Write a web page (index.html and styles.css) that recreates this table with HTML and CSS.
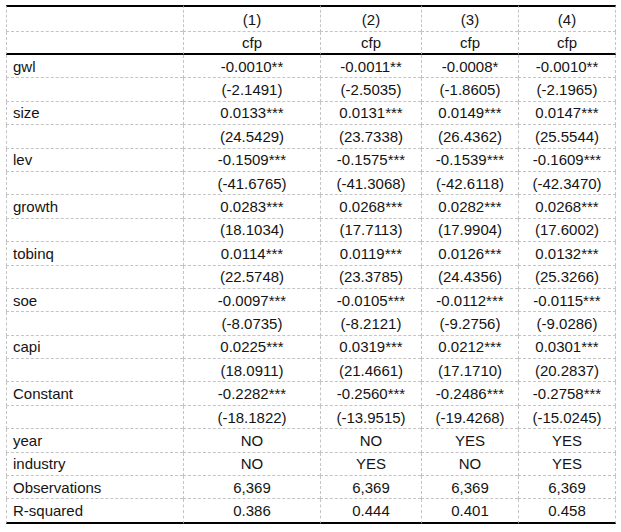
FILE: index.html
```html
<!DOCTYPE html>
<html>
<head>
<meta charset="utf-8">
<link rel="stylesheet" href="styles.css">
</head>
<body>
<table class="reg">
  <colgroup>
    <col class="c0"><col class="c1"><col class="c2"><col class="c3"><col class="c4">
  </colgroup>
  <thead>
    <tr class="h1"><td></td><td>(1)</td><td>(2)</td><td>(3)</td><td>(4)</td></tr>
    <tr class="h2"><td></td><td>cfp</td><td>cfp</td><td>cfp</td><td>cfp</td></tr>
  </thead>
  <tbody>
    <tr><td>gwl</td><td>-0.0010**</td><td>-0.0011**</td><td>-0.0008*</td><td>-0.0010**</td></tr>
    <tr><td></td><td>(-2.1491)</td><td>(-2.5035)</td><td>(-1.8605)</td><td>(-2.1965)</td></tr>
    <tr><td>size</td><td>0.0133***</td><td>0.0131***</td><td>0.0149***</td><td>0.0147***</td></tr>
    <tr><td></td><td>(24.5429)</td><td>(23.7338)</td><td>(26.4362)</td><td>(25.5544)</td></tr>
    <tr><td>lev</td><td>-0.1509***</td><td>-0.1575***</td><td>-0.1539***</td><td>-0.1609***</td></tr>
    <tr><td></td><td>(-41.6765)</td><td>(-41.3068)</td><td>(-42.6118)</td><td>(-42.3470)</td></tr>
    <tr><td>growth</td><td>0.0283***</td><td>0.0268***</td><td>0.0282***</td><td>0.0268***</td></tr>
    <tr><td></td><td>(18.1034)</td><td>(17.7113)</td><td>(17.9904)</td><td>(17.6002)</td></tr>
    <tr><td>tobinq</td><td>0.0114***</td><td>0.0119***</td><td>0.0126***</td><td>0.0132***</td></tr>
    <tr><td></td><td>(22.5748)</td><td>(23.3785)</td><td>(24.4356)</td><td>(25.3266)</td></tr>
    <tr><td>soe</td><td>-0.0097***</td><td>-0.0105***</td><td>-0.0112***</td><td>-0.0115***</td></tr>
    <tr><td></td><td>(-8.0735)</td><td>(-8.2121)</td><td>(-9.2756)</td><td>(-9.0286)</td></tr>
    <tr><td>capi</td><td>0.0225***</td><td>0.0319***</td><td>0.0212***</td><td>0.0301***</td></tr>
    <tr><td></td><td>(18.0911)</td><td>(21.4661)</td><td>(17.1710)</td><td>(20.2837)</td></tr>
    <tr><td>Constant</td><td>-0.2282***</td><td>-0.2560***</td><td>-0.2486***</td><td>-0.2758***</td></tr>
    <tr><td></td><td>(-18.1822)</td><td>(-13.9515)</td><td>(-19.4268)</td><td>(-15.0245)</td></tr>
    <tr><td>year</td><td>NO</td><td>NO</td><td>YES</td><td>YES</td></tr>
    <tr><td>industry</td><td>NO</td><td>YES</td><td>NO</td><td>YES</td></tr>
    <tr><td>Observations</td><td>6,369</td><td>6,369</td><td>6,369</td><td>6,369</td></tr>
    <tr class="last"><td>R-squared</td><td>0.386</td><td>0.444</td><td>0.401</td><td>0.458</td></tr>
  </tbody>
</table>
</body>
</html>
```
FILE: styles.css
```css
html, body {
  margin: 0;
  padding: 0;
  background: #ffffff;
}
body {
  padding: 5px 0 0 6px;
  font-family: "Liberation Sans", Arial, sans-serif;
  font-size: 15px;
  color: #141414;
}
.reg {
  border-collapse: separate;
  border-spacing: 0;
  table-layout: fixed;
  width: 610px;
}
.c0 { width: 177px; }
.c1 { width: 137px; }
.c2 { width: 101px; }
.c3 { width: 97px; }
.c4 { width: 98px; }
.reg td {
  padding: 0;
  height: 22.4px;
  line-height: 17px;
  text-align: center;
  vertical-align: middle;
  border-bottom: 1px dashed #c4c4c4;
  border-left: 1px dashed #c4c4c4;
  box-sizing: content-box;
  white-space: nowrap;
}
.reg td:last-child {
  border-right: 1px dashed #c4c4c4;
}
.reg td:first-child {
  text-align: left;
  padding-left: 6px;
}
.reg .h1 td {
  border-top: 2px solid #000;
  height: 24px;
}
.reg .h2 td {
  height: 21px;
  border-bottom: 2px solid #000;
}
.reg .last td {
  border-bottom: 2px solid #000;
}
```
